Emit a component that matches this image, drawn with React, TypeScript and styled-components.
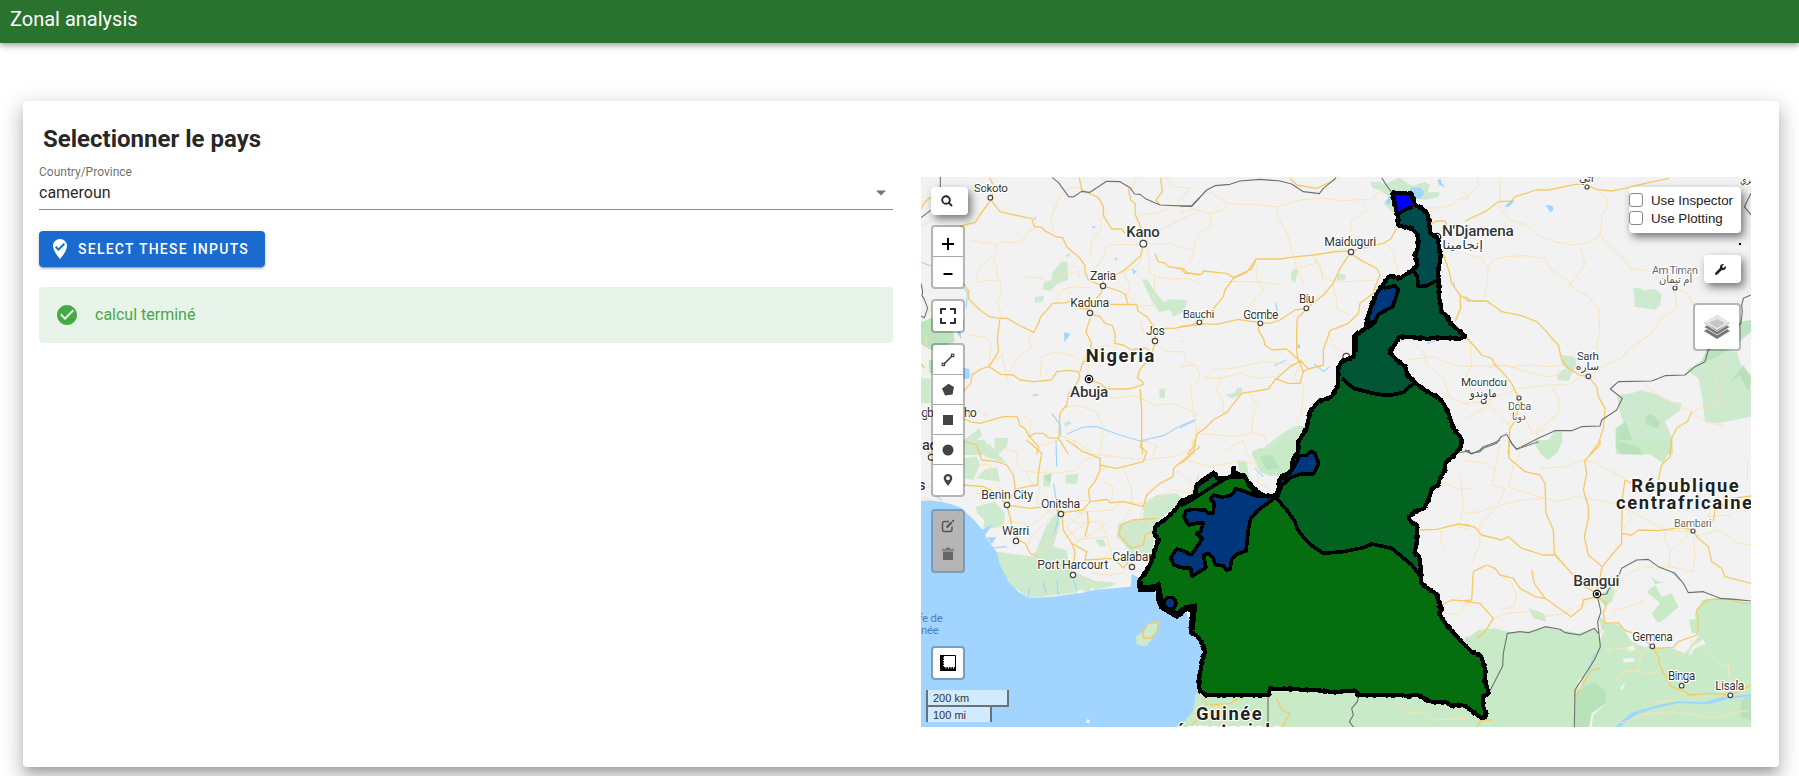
import React from "react";
import styled, { createGlobalStyle, css } from "styled-components";

const GlobalStyle = createGlobalStyle`
  * { box-sizing: border-box; }
  body { margin: 0; background: #fff; font-family: Roboto, "Liberation Sans", sans-serif; color: rgba(0,0,0,.87); overflow: hidden; }
`;

const Page = styled.div`
  height: 776px;
  display: flex;
  flex-direction: column;
  overflow: hidden;
`;

const AppBar = styled.header`
  height: 43px;
  flex: none;
  display: flex;
  align-items: center;
  padding: 0 10px 5px;
  background: #2a732e;
  color: #fff;
  font-size: 20px;
  line-height: 24px;
  box-shadow: 0 2px 4px -1px rgba(0,0,0,.2), 0 4px 5px rgba(0,0,0,.14), 0 1px 10px rgba(0,0,0,.12);
`;

const Card = styled.main`
  margin: 58px 20px 0 23px;
  height: 666px;
  flex: none;
  display: flex;
  gap: 28px;
  padding: 0 28px 0 16px;
  background: #fff;
  border-radius: 4px;
  box-shadow: 0 7px 8px -4px rgba(0,0,0,.2), 0 12px 17px 2px rgba(0,0,0,.14), 0 5px 22px 4px rgba(0,0,0,.12);
`;

const FormColumn = styled.section`
  width: 854px;
  display: flex;
  flex-direction: column;
  align-items: flex-start;
`;

const Title = styled.h2`
  margin: 22px 0 0 4px;
  font-size: 24px;
  font-weight: 700;
  line-height: 32px;
`;

const Field = styled.div`
  width: 100%;
  height: 55px;
  border-bottom: 1px solid #8a8a8a;
  display: flex;
  flex-direction: column;
  padding-top: 10px;
`;

const FieldLabel = styled.label`
  font-size: 12px;
  line-height: 14px;
  color: rgba(0,0,0,.6);
`;

const FieldValue = styled.div`
  display: flex;
  align-items: center;
  justify-content: space-between;
  font-size: 16px;
  line-height: 28px;
`;

const SubmitButton = styled.button`
  margin-top: 21px;
  width: 226px;
  height: 36px;
  display: flex;
  align-items: center;
  padding: 0 0 0 9px;
  gap: 6px;
  border: 0;
  border-radius: 4px;
  background: #196bd0;
  color: #fff;
  font: 500 14px Roboto, sans-serif;
  letter-spacing: 1.25px;
  text-transform: uppercase;
  white-space: nowrap;
  box-shadow: 0 3px 1px -2px rgba(0,0,0,.2), 0 2px 2px rgba(0,0,0,.14), 0 1px 5px rgba(0,0,0,.12);
`;

const Alert = styled.div`
  width: 100%;
  margin-top: 20px;
  height: 56px;
  display: flex;
  align-items: center;
  gap: 16px;
  padding: 0 16px;
  border-radius: 4px;
  background: #e8f3e9;
  color: #46a948;
  font-size: 16px;
`;

const AlertText = styled.span`
  padding-bottom: 2px;
`;

const MapFrame = styled.section`
  position: relative;
  width: 830px;
  height: 550px;
  margin-top: 76px;
  flex: none;
  overflow: hidden;
  background: #f2f2f2;
`;

const MapCanvas = styled.svg`
  display: block;
  width: 830px;
  height: 550px;
  font-family: Roboto, "Noto Sans", "DejaVu Sans", sans-serif;
`;

const Controls = styled.div<{ $side: "left" | "right" }>`
  position: absolute;
  top: 10px;
  ${(p) => p.$side}: 10px;
  display: flex;
  flex-direction: column;
  align-items: ${(p) => (p.$side === "left" ? "flex-start" : "flex-end")};
`;

const panel = css`
  background: #fff;
  border-radius: 4px;
  box-shadow: 3px 4px 9px rgba(0,0,0,.52);
`;

const ToolButton = styled.button`
  ${panel}
  width: 37px;
  height: 28px;
  padding: 0 5px 0 0;
  border: 0;
  display: flex;
  align-items: center;
  justify-content: center;
`;

const Bar = styled.div<{ $gap: number; $muted?: boolean }>`
  margin-top: ${(p) => p.$gap}px;
  border: 2px solid rgba(0,0,0,.25);
  border-radius: 4px;
  background: ${(p) => (p.$muted ? "#b5b5b5" : "#fff")};
  background-clip: padding-box;
`;

const BarButton = styled.button<{ $divided?: boolean; $size?: number; $drop?: number }>`
  display: flex;
  align-items: center;
  justify-content: center;
  width: ${(p) => p.$size ?? 30}px;
  height: ${(p) => p.$size ?? 30}px;
  padding: ${(p) => p.$drop ?? 0}px 0 0;
  border: 0;
  border-bottom: ${(p) => (p.$divided ? "1px solid #aaa" : "0")};
  background: transparent;
`;

const CheckPanel = styled.div`
  ${panel}
  width: 112px;
  height: 46px;
  padding: 4px 0;
`;

const CheckRow = styled.label`
  display: flex;
  align-items: center;
  gap: 8px;
  height: 18px;
  font: 13.3px "Liberation Sans", Arial, sans-serif;
  color: #222;
  white-space: nowrap;
`;

const CheckBox = styled.span`
  width: 14px;
  height: 14px;
  border: 1px solid #888;
  border-radius: 3px;
  background: #fff;
`;

const EmptyControl = styled.span`
  width: 2px;
  height: 2px;
  margin: 10px 0;
  background: #000;
`;

const Scale = styled.div`
  position: absolute;
  left: 5px;
  bottom: 5px;
`;

const ScaleLine = styled.div<{ $w: number; $top?: boolean }>`
  width: ${(p) => p.$w}px;
  height: ${(p) => (p.$top ? 17 : 15)}px;
  border: 2px solid #6d7173;
  border-top: 0;
  ${(p) => !p.$top && "border-bottom: 0;"}
  padding-left: 5px;
  background: rgba(255,255,255,.5);
  font: 11px/16px "Liberation Sans", Arial, sans-serif;
  color: #333;
`;

const Icon = ({ d, size = 24, fill = "currentColor", box = 24 }: { d: string; size?: number; fill?: string; box?: number }) => (
  <svg width={size} height={size} viewBox={`0 0 ${box} ${box}`} fill={fill}>
    <path d={d} />
  </svg>
);

/* ---------- map data: each sheet is drawn at three units per pixel ---------- */

type Label = [x: number, y: number, w: number, text: string, size: number, weight?: number, color?: string];
interface Sheet {
  x: number;
  y: number;
  park?: string;
  dark?: string;
  land?: string;
  water?: string;
  river?: string;
  minor?: string;
  major?: string;
  border?: string;
}

const sheets: Sheet[] = [
  {
    x: -11, y: -12,
    park: "M395 372L404 350L424 348L426 326L452 290L472 290L474 345L440 358L420 378ZM374 396L402 392L398 410L375 413ZM694 342L712 345L727 368L749 398L762 412L781 402L833 406L820 440L790 455L780 435L748 440L728 412ZM467 270L479 265L478 274L469 278ZM748 674L766 670L764 699L748 700ZM462 776L478 766L484 776L467 785ZM160 825L208 790L216 812L190 832L230 838L234 870H160ZM255 820L296 818L290 845L262 870L252 862ZM33 640H62V715H33Z",
    dark: "M33 472L66 458L130 500L134 530L66 556L33 538ZM56 585H68V625H58Z",
    water: "M462 502L482 506L463 532ZM666 312L681 319L670 328ZM371 160L377 154V167ZM545 183L560 186L548 190ZM616 275L624 286L614 284ZM160 455L162 490L152 500L154 523L142 505ZM160 608L178 612L179 640L160 643Z",
    river: "M33 292L65 303M160 368L172 382L168 430M425 745L450 778L452 815M470 808L520 786L560 785L630 810L690 828L760 812L806 785L858 763M368 691L385 689",
    minor: "M180 224L220 235L250 233L260 245L275 230L322 234L345 215L360 195L380 190M255 235L262 262L250 280L262 310L258 330L270 350L275 378L262 410L272 440L275 458M240 278L208 310L198 345L204 352L232 346L262 348M338 335L390 338L410 350L430 345L480 320L510 335M350 560L365 545L355 518L370 505M440 415L447 388L460 372L490 365L540 368M470 300L500 306L510 330M430 200L422 160L438 120L460 78L500 65L525 80M540 280L545 230L575 190L572 155L590 130L560 95M585 52L575 38M600 240L640 238L680 240L700 236L760 190L868 138M700 236L780 236L820 250L858 258M700 245L690 290L670 310L640 320M712 250L720 290L715 320L735 335L780 342L835 340L868 356M590 240L585 265L540 340M640 320L660 365L650 390L690 425L730 420L735 330M690 465L700 500L725 515M735 535L770 560L820 560L830 590L868 606M610 590L618 545L590 540L545 555L520 580L510 620M545 555L530 630M495 575L440 560L395 575L390 640M300 620L320 580L365 545M180 510L228 518L245 540L235 600M235 600L275 570L295 650M160 735L210 740L235 755M33 180L55 175L65 165M33 450L45 460L60 435L65 425M48 510L50 540M570 690L620 700L660 690L695 700L735 722L790 715L868 750M450 810L500 830L540 860M452 730L500 720L560 740L580 790L570 868M695 825L740 840L730 868M358 815L362 765L335 750M840 868L858 800L868 790M690 150L740 145L800 120L840 70L790 65L765 38M660 80L680 38",
    major: "M33 132L45 110L62 97M150 184L175 177L195 173L210 150L240 108L245 102L248 80L250 60L238 38M242 104L270 140L350 158L366 160L372 184L395 187L405 198L440 216L458 218L470 245L510 280L525 302L525 320L535 345L576 362L582 345L640 318L672 290L692 272L700 238M160 355L175 376L176 402L210 435L238 455L270 460L292 460L325 480L372 502L384 478L392 455L405 442L428 415L470 413L478 408L510 430L538 432L575 380L576 362L620 375L645 387L655 420M538 445L570 455L585 475L608 482L616 510L614 535L640 540L665 555L700 548L720 555M600 418L680 418L684 438L710 455L732 485L736 525M270 460L262 520L265 560L237 605L218 610L186 628L182 655L160 680M237 605L272 628L310 630L330 645L370 650L425 645L440 620L475 616L505 620L510 635L500 655L475 690L470 720L450 745L448 790L446 820L415 818L400 805L375 805L358 815L386 845L380 868M358 815L345 790L330 782L322 755L280 755L210 775L180 770L160 760M540 460L528 500L544 535L540 565L515 600L512 620M540 645L570 655L590 672L650 672L665 670L700 658L697 650L682 640L690 612L720 580L735 535M735 515L765 490L790 490L840 482L868 470M690 672L695 730L695 825L697 868M446 820L475 868M735 267L745 290L765 294L775 305L822 312L830 322L868 330M508 38L515 75L565 98L580 125L580 152L605 192L635 192L645 205M655 72L662 105L675 115L676 150L690 180L700 238M752 38L757 80L738 105L748 118M33 598L45 610M33 840L65 870",
    border: "M91 36V68M33 158L62 136M427 38L445 52L476 95L490 96L515 79L540 82L590 49L630 50L660 68L674 87L690 88L710 103L750 120L845 124L870 97M33 355L38 378L36 392L43 403L53 430L43 458L33 453",
  },
  {
    x: 259, y: -12,
    park: "M572 52L600 50L612 60L640 46L660 38L682 55L700 62L735 50L750 60L742 82L780 82L775 95L735 105L710 100L690 130L655 155L630 135L610 115L625 95L600 75L576 68ZM332 325L345 310L355 318L345 354L335 345ZM470 332L480 325L497 330L494 345L472 346ZM137 690L165 682L172 668L186 668L185 690L155 700ZM300 810L340 785L380 780L365 868H235L255 845ZM216 858L240 850L255 868H216ZM0 405L24 406L8 430H0Z",
    water: "M680 84L695 68L722 68L733 82L722 102L700 98ZM618 110L630 92L634 110L624 121ZM772 44L782 43L785 55L798 67L778 60ZM351 550L355 534L362 548Z",
    river: "M403 597L430 620L447 607M282 602L320 584M0 788L48 765M287 412L292 440M741 535L765 528M821 350L823 362",
    minor: "M90 80L140 115L180 118L230 118L290 126L360 105L430 98L480 108L550 103L580 105L590 85L612 75M140 115L130 135L90 145L95 180L60 205L45 235L35 285L10 310M290 126L295 160L320 200L340 270L350 310L372 355M500 250L515 170L545 145L560 140L550 110M0 145L45 132L90 145M350 310L410 295L400 275L440 345L500 350L590 345M430 350L420 300L400 275M455 350L470 405L470 430L510 450M135 350L220 350L305 360M235 290L228 340L250 375L210 420M445 500L455 535L500 570L475 575M615 230L640 260L655 330M75 640L95 615L160 610L250 590L350 600M75 640L120 640L180 625L235 640L285 635M120 640L110 680L130 710L130 750M205 680L235 725L220 745L215 800L250 812L260 835M0 605L40 600L60 620L55 650L30 665L40 740L52 805M52 805L110 810L165 815L215 805M360 600L340 640L372 660L365 740L350 770M0 530L20 527M430 265L500 250M706 125L760 130L820 120L830 105L868 95M846 80L868 92M680 585L760 575L820 600L870 604M680 520L730 560L740 600L790 640L810 700L868 720",
    major: "M0 308L15 325L65 328L70 318L140 325L160 338L215 312L228 282L300 282L350 275L400 270L470 260L512 258L610 235L632 222L650 190M228 282L200 322L160 340L135 375L130 395L105 425L95 440L65 468M0 484L50 480L60 476L110 478L175 463L205 468L270 475L300 465L345 435L380 430L430 390L460 355L480 310L510 265L550 290L590 310L600 330L585 365L580 385L540 415L535 445L505 475L450 497L430 555L430 600L385 612L365 590L345 575L320 552L275 555L255 540L250 520L235 495L237 475M380 432L352 460L350 500L350 560L356 590M385 612L368 620L360 590L330 605L285 645L265 672L185 685L140 742L100 765L75 790L50 808L45 840L22 868M285 640L325 655L360 655L370 620M330 40L350 60L410 70L465 45L468 38M748 180L770 168L795 168L800 180M790 268L808 320L815 355L840 390L842 430L825 470M840 390L868 410M850 516L868 525M720 210L735 205L750 205",
    border: "M0 123L35 123L80 75L105 62L150 58L180 48L240 43L300 48L335 57L370 80L418 86L430 70L455 50L468 38M605 38L620 62L638 85M862 857H870",
  },
  {
    x: 544, y: -12,
    park: "M505 370L520 368L535 375L570 373L590 388L585 420L570 435L510 425ZM290 570L330 575L335 605L320 625L292 600ZM275 630L300 610L320 625L310 648L280 645ZM212 832L250 825L270 798L290 800L292 830L270 868H230L212 845ZM455 690L500 685L530 675L580 690L620 710L650 715L645 735L600 770L622 820L625 868H450L480 790L465 740ZM665 615L720 580L760 555L815 560L828 600L858 630V755L760 775L720 768L712 700L700 640Z",
    dark: "M452 790L480 770L500 820L500 868H470L452 850ZM540 755L560 748L585 770L580 790L545 780ZM735 525L825 470L858 465V500L800 550L735 585L710 590ZM797 650L835 600L858 640L850 680L825 630Z",
    water: "M118 125L140 104L148 108L132 125ZM241 119L262 122L265 136L256 142Z",
    river: "M10 407L65 408L75 415",
    minor: "M105 38L105 130L135 165L185 180L225 215L270 230L320 240L375 232L405 210L410 180L410 150L425 130L425 100L395 72M0 265L50 280L70 315L65 365L58 400M70 310L85 285L120 275L180 272L240 280L255 310L305 345L320 365L370 395L400 430L405 500L395 540L400 560L370 598M348 250L360 300L312 365M405 210L430 240L470 275L495 310L560 320L590 345L630 370L635 430L590 460L555 510L495 550L470 580L410 605L380 625M630 370L665 385L690 425M0 605L95 600L140 605L190 600L260 605L300 600M60 610L120 600L200 625L250 635L335 620M0 715L60 710L100 695L160 670L250 660L310 660L350 635M60 710L110 755L130 780L155 720M200 805L240 780L285 740L280 700L260 665M180 760L205 810L240 790M0 760L40 740L70 720M38 40L40 60L0 108M15 530L20 600L0 640M535 655L580 690L645 725L680 740L720 725L765 722L768 700L750 650L760 610L780 580M680 740L720 770L780 783M488 180L490 200",
    major: "M0 168L60 140L100 110L140 108L150 95L215 75L250 75L330 58L360 58L395 73L440 78L480 70L540 55L612 40M0 395L20 408L65 408L90 425L110 440L170 452L215 470L245 500L260 520L280 540L290 585L310 610L345 630L370 635L395 665L400 695L420 730L415 790L400 835L375 868M0 515L25 540L50 570L80 580L90 600L120 630L140 655L160 700L155 760L135 790L130 868M680 740L668 768L635 790L620 820L615 868",
    border: "M858 85L838 125L858 150M858 390L835 400L830 420L832 440L828 475L730 555L720 590L690 605L660 630L600 632L560 648L460 650L436 672L472 700L455 735L410 765L405 783L350 785L320 797L270 797L220 820L155 853L140 835L125 808L108 815L95 835L55 850L45 860L20 865L0 855",
  },
  {
    x: -11, y: 263,
    park: "M165 0L225 0L235 20L210 35L190 25ZM160 55L200 50L210 75L190 120L165 115ZM225 50L290 70L235 10ZM225 88L262 82L270 125L200 115ZM400 105L425 100L420 140L400 138ZM466 105L505 102L500 132L468 130ZM196 200L255 185L268 200L285 220L280 260L220 268L222 240L202 220ZM700 190L740 165L800 160L820 180L770 220L740 250L725 345L665 340L635 305L620 290L625 250L700 235ZM555 300L580 298L590 318L570 320ZM865 100L870 190L840 180ZM258 335L370 350L410 255L440 220L450 250L430 320L470 330L480 390L560 425L540 452L360 475L310 440L270 390ZM550 422L620 428L600 440L550 450Z",
    dark: "M402 112L425 100L420 130Z",
    water: "M33 183C70 177 110 186 150 202L190 238L218 270L228 292L262 340L268 372L296 425L325 455L360 475L430 470L500 460L560 449L662 440L665 402L690 415L720 450L830 520L850 580L890 640L866 735L860 800L835 840L825 861H33ZM215 270L248 252L225 285ZM230 292L258 292L245 312ZM680 0L715 0L700 5Z",
    river: "M438 0L440 80M430 130L437 170L445 240L430 285M80 170L95 180M490 420L500 448M358 440L355 470M400 425L408 460M440 420L445 465M235 325L290 320",
    minor: "M250 0L280 25L320 35L325 80L350 95L440 100L500 90L520 60L560 50M350 95L365 130L390 140L380 190L430 220M380 20L450 0M490 0L510 35L565 45M565 45L700 60L790 50L870 15M590 80L560 110L610 140L605 180L570 180M640 80L665 150L665 200L640 240L665 300L705 290L730 290M700 190L690 240L700 250M700 190L740 180L790 150L870 165M700 190L640 185L600 190M790 85L850 130L845 165M535 180L440 195L360 260L340 250L290 245M530 210L470 260L500 300L590 290L605 340L570 360M460 215L500 250L570 245L590 285M430 225L365 290L350 320M455 270L410 310L385 330L360 350M465 290L500 270L545 240M490 310L550 280L590 250M545 400L600 405L640 398L660 415M510 410L560 440M185 70L240 75L245 120L300 170M200 160L250 170L300 190M720 220L725 260M40 150L65 135M33 175L90 185M600 215L640 180M605 210L530 215L500 220",
    major: "M150 0L200 15L215 60L260 65L290 75L310 105L316 150L290 195L360 205L420 198L455 218L520 210L540 185L535 150L555 125L570 90L570 75L620 85L700 65L710 35L690 20L697 0M350 0L395 40L385 100L383 135L350 140L310 150M160 135L220 140L250 155L290 195L300 230L310 275L325 300L345 310L360 340L385 350M456 230L460 270L485 310L495 335L490 385M485 310L530 335L525 360L610 355L640 385M540 185L590 178L600 188L640 185L700 200L710 165L750 130L790 110L790 85L870 20M470 0L520 35L570 55L570 85M640 300L665 325L700 315L705 285L735 270M640 300L625 280L635 255L665 240L740 235M640 385L665 350M525 290L535 250L532 215",
    land: "M500 455L515 448L525 456L505 461ZM528 848L532 836L540 842L538 850Z",
  },
  {
    x: 259, y: 263,
    park: "M40 155L48 135L80 115L105 95L130 120L70 190ZM172 60L200 65L210 130L180 100ZM215 40L240 25L280 25L310 0H370V60L310 105L270 108L240 95ZM0 861L40 810L48 760L90 770H870V861ZM270 755H535V861H270ZM855 590H870V800H855Z",
    dark: "M240 50L275 45L300 85L260 90Z",
    minor: "M35 0L45 40L20 60L90 80L170 65L230 70M130 35L190 0M230 70L235 130L275 150L270 160M190 0L200 40L230 70M785 270L780 300L800 330M840 100L850 200L835 260L870 270M785 110L790 130L840 150L870 145M780 515L840 525L855 490L870 495M650 785L680 820L740 815L760 840L870 835M100 790L140 830L150 861",
    major: "M45 0L40 35L10 65L0 70M720 270L770 268L835 252L870 258M785 495L815 480L870 484M65 775L80 790L60 830L30 861M290 775L305 810L330 820L305 861M185 770L150 790L90 795",
    border: "M264 769V861M535 769L532 785L515 805L520 825L508 845L520 861M838 38L870 32",
    river: "M225 85L250 110",
  },
  {
    x: 544, y: 263,
    park: "M0 600L40 570L90 565L127 575L165 580L230 562L290 570L340 580L390 565L405 600L430 550L465 555L480 575L500 605L535 620L620 625L660 640L700 590L690 520L712 480L770 472L858 488V861H0ZM210 0L290 0L280 35L250 60L225 40ZM460 0L610 0L615 30L595 70L550 40L500 45ZM190 505L235 520L245 545L205 535ZM400 470L430 445L450 450L440 485L420 500ZM545 455L570 435L590 470L620 460L640 500L590 545L575 545L560 520L585 490ZM560 410L580 425L605 425L570 433ZM672 540L695 535V580L680 580ZM400 525L435 560L455 585L410 570Z",
    dark: "M345 745L390 725L425 760L420 790L380 820L375 861H328L332 765ZM830 780L858 765V842L825 830ZM460 5L520 20L535 45L490 40Z",
    land: "M425 790L385 825L380 861H372L380 820ZM465 745L478 730L480 736L470 750ZM475 655L512 655L505 665L475 668ZM480 625L505 615L512 630L495 635ZM670 645L682 620L715 598L722 612L690 625L678 645ZM340 720L350 712L350 745L340 755Z",
    water: "M450 861L500 818L580 795L640 784L720 786L770 772L858 762V769L790 777L730 793L640 790L570 805L510 826L465 861Z",
    river: "M389 640L370 700M620 395L645 420",
    minor: "M0 60L60 70L90 90L80 135L120 145L95 200L40 260L45 310L20 370M90 90L105 10M0 220L45 215L95 200M95 200L150 185L170 180L240 175L280 185L330 170L400 180L450 190L475 215M145 75L130 140L155 150L240 175M225 85L300 80L350 60L385 65L430 90L480 115M170 0L160 60L145 75M470 270L500 235L480 200M490 210L600 270L600 300L615 330L612 380M600 270L680 275L620 330M80 380L110 410L140 430L155 470L145 500L110 510M85 535L125 520L190 515L240 530L300 520L325 500M340 500L400 470L450 465L470 420L500 395L540 380L580 385L600 378L640 385L685 395L690 350L685 290M445 530L450 510L490 500L540 480M405 570L440 620L430 660M420 630L480 625L530 640L560 620M530 640L520 690L470 700L450 730M480 690L570 700L590 680M620 640L670 650L680 600L720 630L770 680L790 670L795 750M470 850L530 825L620 815L700 825L740 835L855 810M690 290L760 270L820 310L858 315M740 190L730 230L800 225M848 60V120M660 755L620 780L560 790",
    major: "M0 252L30 262L50 285L110 300L130 290L170 325L235 345L270 345L320 400L360 440L395 460M132 0L132 55L180 95L225 105L240 130L243 220L265 270L268 340L320 400M405 0L405 15L358 62L365 100L355 150L370 200L370 235L358 290L370 345L412 380L395 455M412 380L440 345L470 310L470 275L472 175L480 120L500 130M470 280L500 285L520 270L580 272L650 262L682 270L700 295L730 320L740 365L770 385L780 410L858 430M0 482L20 480L25 395L65 375L90 385L105 405L145 415L165 445L210 470L240 475L290 510L318 530L350 505L355 480L395 470M200 390L208 430L240 475M0 485L45 490L85 535L60 575L35 595M395 470L425 490L415 520L420 550L460 548L480 572L510 580L550 610L570 625L625 622L640 605L695 585L700 550L695 510L725 480L790 476L830 490L858 490M562 620L580 650L585 680L620 740L660 755L670 765L740 760L795 765L820 755L858 735M405 685L380 690L345 745L330 780M620 0L615 50L590 75L580 120M35 861L50 840L80 840M745 245L750 210L800 175L858 168",
    border: "M0 32L20 42L45 30L55 20L85 10L105 0M135 0L140 10L155 28L220 5M395 460L408 515L398 545L406 620L388 660L330 750L328 861M396 465L425 462L430 450L460 410L470 385L515 360L550 358L580 380L630 400L655 430L670 458L715 455L765 475L810 478L858 483M75 752L113 678L115 640L127 580L165 575L190 578L215 570L240 560L285 568L300 578L345 585L388 565L400 580",
  },
];

const SEA = "#4a7fc4";

const labels: Array<{ x: number; y: number; items: Label[] }> = [
  {
    x: -11, y: -12,
    items: [
      [192, 81, 102, "Sokoto", 35], [649, 216, 100, "Kano", 45, 500], [540, 346, 79, "Zaria", 37], [481, 427, 117, "Kaduna", 37],
      [708, 509, 57, "Jos", 37], [527, 592, 206, "Nigeria", 55, 700, "#222"], [480, 697, 115, "Abuja", 46, 500],
      [34, 756, 38, "gb", 37], [162, 756, 38, "ho", 37], [36, 856, 48, "ad", 45, 500],
    ],
  },
  {
    x: 259, y: -12,
    items: [[433, 243, 156, "Maiduguri", 37], [357, 414, 46, "Biu", 36], [8, 460, 95, "Bauchi", 35], [190, 462, 105, "Gombe", 36]],
  },
  {
    x: 544, y: -12,
    items: [
      [-69, 214, 215, "N'Djamena", 46, 500], [-68, 252, 122, "إنجامينا", 37], [342, 52, 44, "أتي", 32],
      [561, 327, 138, "Am Timan", 34, 400, "#666"], [582, 354, 100, "أم تيمان", 32, 400, "#555"],
      [336, 585, 66, "Sarh", 35], [332, 616, 70, "ساره", 33], [-12, 663, 138, "Moundou", 35], [14, 696, 82, "ماوندو", 33],
      [129, 735, 70, "Doba", 33, 400, "#555"], [141, 765, 42, "دوبا", 32, 400, "#555"], [825, 54, 40, "بري", 30],
    ],
  },
  {
    x: -11, y: 263,
    items: [
      [25, 150, 21, "s", 42, 500], [214, 178, 155, "Benin City", 37], [393, 204, 118, "Onitsha", 37], [276, 285, 82, "Warri", 37],
      [382, 387, 213, "Port Harcourt", 37], [607, 363, 120, "Calabar", 37],
      [-24, 546, 122, "Golfe de", 34, 400, SEA], [-15, 582, 101, "Guinée", 34, 400, SEA],
    ],
  },
  { x: 259, y: 263, items: [[48, 840, 197, "Guinée", 55, 700, "#222"], [-14, 891, 318, "équatoriale", 55, 700, "#222"]] },
  {
    x: 544, y: 263,
    items: [
      [499, 157, 322, "République", 55, 700, "#222"], [453, 208, 408, "centrafricaine", 55, 700, "#222"],
      [627, 260, 113, "Bambari", 33, 400, "#666"], [325, 438, 138, "Bangui", 46, 500], [502, 603, 121, "Gemena", 36],
      [609, 719, 82, "Binga", 36], [751, 750, 87, "Lisala", 36],
    ],
  },
];

const towns: Array<{ x: number; y: number; at: Array<[number, number, number]> }> = [
  { x: -11, y: -12, at: [[241, 98, 7], [700, 236, 10], [579, 363, 8], [540, 444, 8], [735, 528, 8]] },
  { x: 259, y: -12, at: [[513, 261, 8], [379, 430, 7], [58, 472, 7], [241, 475, 7], [499, 575, 10]] },
  { x: 544, y: -12, at: [[366, 66, 6], [630, 369, 6], [370, 634, 7], [56, 709, 7], [162, 699, 6]] },
  { x: -11, y: 263, at: [[291, 195, 8], [453, 222, 8], [318, 303, 8], [489, 405, 8], [666, 381, 8], [64, 52, 9]] },
  { x: 544, y: 263, at: [[684, 273, 6], [562, 619, 7], [650, 737, 7], [796, 766, 7]] },
];

const capitals = [
  { x: 168, y: 202 },
  { x: 676, y: 417 },
  { x: 516, y: 60 },
];

const outline =
  "M636 84L693 86L699 98L706 122L724 128L742 146L748 170L750 205L770 215L774 222L777 250L782 268L778 300L774 320L776 345L778 400L784 440L800 452L812 475L834 495L856 514L840 521L800 518L740 521L700 517L656 516L648 534L628 560L650 585L676 605L682 630L704 652L735 676L776 698L790 715L806 745L820 790L838 812L846 825L842 848L820 873L797 893L795 915L780 940L775 960L757 970L745 1005L733 1030L705 1040L685 1057L695 1073L712 1080L710 1135L703 1165L718 1175L722 1205L724 1255L750 1275L770 1287L778 1315L787 1333L777 1345L800 1380L840 1425L875 1460L903 1472L912 1500L916 1520L915 1550L927 1585L910 1595L910 1625L920 1652L905 1660L885 1645L855 1622L830 1620L815 1624L800 1612L768 1612L745 1608L720 1592L700 1590L685 1595L670 1591L535 1591L528 1577L460 1581L410 1576L350 1573L320 1571L270 1571L266 1591L80 1591L60 1577L56 1560L60 1525L70 1470L76 1463L65 1432L50 1412L33 1403L33 1375L42 1328L28 1335L14 1328L2 1350L-15 1345L-32 1332L-55 1325L-65 1305L-65 1265L-85 1265L-122 1268L-122 1245L-105 1225L-85 1190L-75 1155L-65 1125L-77 1105L-75 1085L-40 1060L-10 1030L2 1010L45 990L50 960L75 945L105 923L112 940L140 940L160 933L160 905L164 925L195 933L205 955L228 975L233 988L275 995L294 984L298 945L318 933L335 915L338 885L355 858L355 830L380 790L390 740L415 710L455 695L475 660L475 610L484 590L522 575L525 510L555 492L565 450L575 420L590 385L628 333L660 340L694 318L713 300L705 270L715 245L713 210L695 190L655 182L653 155L645 120Z";

const centreLine = "M704 652L670 682L635 690L610 690L580 685L520 670L485 640";
const southLine = "M290 1000L320 1035L345 1070L352 1092L375 1123L400 1145L430 1165L490 1160L550 1148L575 1137L635 1150L665 1175L695 1200L722 1235";
const farNorthLine = "M698 315L712 335L715 365L740 362L775 345";
const westLake =
  "M290 995L233 995L190 978L165 970L162 982L150 992L125 996L100 990L90 1003L102 1012L100 1045L85 1045L75 1035L38 1033L18 1038L12 1055L25 1080L48 1075L70 1072L62 1100L48 1106L67 1120L48 1150L33 1170L12 1158L-10 1152L-28 1178L-18 1200L5 1208L32 1210L36 1235L55 1222L78 1208L70 1170L85 1165L100 1180L106 1200L130 1202L138 1215L150 1212L155 1183L170 1168L198 1158L205 1095L212 1060L235 1035Z";
const benueSpur = "M292 998L305 962L330 938L360 928L400 928L416 895L405 865L392 858L380 872L358 872L345 900L330 923L305 932L298 955Z";

const Cameroon = () => (
  <g transform="translate(259 -12) scale(.33333)" shapeRendering="crispEdges">
    <clipPath id="country"><path d={outline} /></clipPath>
    <g clipPath="url(#country)">
      <path d={outline} fill="#056f0f" />
      <path d={`${southLine}L900 1240V600L704 652L670 682L610 690L520 670L485 640L300 700V980Z`} fill="#026220" />
      <path d={`${centreLine}L400 620V200L650 280L698 315L712 335L715 365L775 345L870 400V600Z`} fill="#005534" />
      <path d="M640 150L700 120L850 120V340L775 345L715 365L698 315Z" fill="#004b4b" />
      <path d="M620 70H740V120L698 124L650 155Z" fill="#0000ff" />
      <path d="M40 990V940L110 900L125 940Z" fill="#026220" />
    </g>
    <path d={westLake} fill="#00367b" />
    <path d={benueSpur} fill="#00367b" />
    <path d="M588 382L610 370L645 362L655 372L650 390L638 425L595 448L585 470L568 475L572 430Z" fill="#00367b" />
    <ellipse cx="-30" cy="1315" rx="17" ry="17" fill="#00367b" />
    <g fill="none" stroke="#000" strokeWidth="11" strokeLinejoin="bevel">
      <path d={centreLine} />
      <path d={southLine} />
      <path d={farNorthLine} />
      <path d="M650 155L664 140L698 125M2 1022L42 1001L80 975L130 945L160 930" />
      <path d={westLake} />
      <path d={benueSpur} />
      <path d="M610 370L645 362L655 372L650 390L638 425L595 448L585 470L568 475" />
      <ellipse cx="-30" cy="1315" rx="18" ry="18" />
    </g>
    <path d={outline} fill="none" stroke="#000" strokeWidth="12" strokeLinejoin="bevel" />
    <path d={outline} fill="none" stroke="#000" strokeWidth="16" strokeDasharray="9 14 5 21 12 8 7 30" strokeLinejoin="bevel" />
    <path d="M-120 1250L-118 1272H-80L-66 1262L-55 1325L-10 1352L15 1330L42 1325L35 1395M205 955L225 978L240 988" fill="none" stroke="#000" strokeWidth="18" />
    <path d="M160 905V935L195 935M105 923L75 942L50 962M784 1333L776 1320M560 490L582 470M525 560V510" fill="none" stroke="#000" strokeWidth="16" />
  </g>
);

const layerGroup = (s: { x: number; y: number }) => `translate(${s.x} ${s.y}) scale(.33333)`;

const ZonalMap = () => (
  <MapCanvas viewBox="0 0 830 550">
    <rect width="830" height="550" fill="#f2f2f2" />
    {sheets.map((s, i) => (
      <g key={i} transform={layerGroup(s)}>
        <path d={s.park} fill={i >= 4 ? "#c8eac7" : "#cde9ce"} />
        <path d={s.dark} fill="#b5e1b7" fillOpacity=".85" />
        <path d={s.water} fill="#a1d5ff" />
        <path d={s.land} fill="#f2f2f2" />
      </g>
    ))}
    {sheets.map((s, i) => (
      <g key={i} transform={layerGroup(s)} fill="none" strokeLinejoin="round">
        <path d={s.river} stroke="#a1d5ff" strokeWidth="3.5" />
        <path d={s.minor} stroke="#fae3b4" strokeWidth="2.8" />
        <path d={s.major} stroke="#f6ca63" strokeWidth="3.9" />
        <path d={s.border} stroke="#707070" strokeWidth="3.3" />
      </g>
    ))}
    <g transform="translate(-11 263) scale(.33333)">
      <path d="M678 590L705 568L715 548L744 548L742 575L725 598L708 620L680 612Z" fill="#cde9ce" />
      <path d="M744 548L714 551L697 580L702 595L724 594L743 570Z" fill="none" stroke="#f6c95f" strokeWidth="4" />
    </g>
    {towns.map((g, i) => (
      <g key={i} transform={layerGroup(g)} fill="#fff" stroke="#444" strokeWidth="3.6">
        {g.at.map(([x, y, r]) => <circle key={x} cx={x} cy={y} r={r} />)}
      </g>
    ))}
    {capitals.map((c) => (
      <g key={c.x} transform={`translate(${c.x} ${c.y})`}>
        <circle r="3.7" fill="#fff" stroke="#111" strokeWidth="1.2" />
        <circle r="2" fill="#111" />
      </g>
    ))}
    {labels.map((g, i) => (
      <g key={i} transform={layerGroup(g)} strokeWidth="7" strokeLinejoin="round" paintOrder="stroke">
        {g.items.map(([x, y, w, text, size, weight = 400, color = "#333"]) => (
          <text key={text} x={x} y={y} fontSize={size} fontWeight={weight} fill={color} stroke={color === SEA ? "none" : "#fff"} textLength={w}
            lengthAdjust={/[\u0600-\u06ff]/.test(text) ? "spacingAndGlyphs" : "spacing"}>{text}</text>
        ))}
      </g>
    ))}
    <Cameroon />
  </MapCanvas>
);

const SearchIcon = () => (
  <svg width="12" height="12" viewBox="0 0 12 12" fill="none" stroke="#222" strokeWidth="1.9">
    <circle cx="5" cy="5" r="3.8" /><path d="M7.7 7.7L11 11" />
  </svg>
);

const LayersIcon = () => (
  <svg width="28" height="28" viewBox="0 0 28 28">
    <path d="M1 18L14 26L27 18L24 16L14 22L4 16Z" fill="#777" />
    <path d="M1 14L14 22L27 14L24 12L14 18L4 12Z" fill="#777" stroke="#fff" strokeWidth=".6" />
    <path d="M14 2L27 10L14 18.500L1 10Z" fill="#8a8a8a" stroke="#fff" strokeWidth=".6" />
    <path d="M14 1.500L27 9.500L14 17L1 9.500Z" fill="#e6e6e6" />
    <path d="M14 6L22 10L14 15L6 10Z" fill="#c6c6c6" />
  </svg>
);

const drawIcons = [
  <svg key="line" width="14" height="14" viewBox="0 0 14 14" fill="#fff" stroke="#333" strokeWidth="1.5">
    <path d="M3 11L11 3" /><rect x="1.200" y="10.300" width="2.300" height="2.300" strokeWidth="1.100" /><rect x="10.500" y="1.300" width="2.300" height="2.300" strokeWidth="1.100" />
  </svg>,
  <Icon key="poly" box={14} size={14} fill="#444" d="M1 5.500L7.500 .8L13 4L11.500 11.500L4 12.500Z" />,
  <Icon key="rect" box={14} size={14} fill="#444" d="M2 2H12V12H2Z" />,
  <Icon key="circle" box={14} size={14} fill="#444" d="M7 1.500A5.500 5.500 0 1 0 7 12.500A5.500 5.500 0 1 0 7 1.500Z" />,
  <svg key="pin" width="14" height="14" viewBox="0 0 14 14"><path fill="#444" fillRule="evenodd" d="M7 1C4.500 1 2.700 2.800 2.700 5.200C2.700 8 7 12.800 7 12.800S11.300 8 11.300 5.200C11.300 2.800 9.500 1 7 1ZM7 3.200A2 2 0 1 1 7 7.200A2 2 0 1 1 7 3.200Z" /></svg>,
];

export default function App() {
  return (
    <>
      <GlobalStyle />
      <Page>
        <AppBar>Zonal analysis</AppBar>
        <Card>
          <FormColumn>
            <Title>Selectionner le pays</Title>
            <Field>
              <FieldLabel>Country/Province</FieldLabel>
              <FieldValue>
                cameroun
                <Icon d="M7,9.500L12,14.500L17,9.500H7Z" fill="#757575" />
              </FieldValue>
            </Field>
            <SubmitButton>
              <Icon d="M12,2C8.140,2 5,5.140 5,9C5,14.250 12,22 12,22C12,22 19,14.250 19,9C19,5.140 15.860,2 12,2M10.470,14L7,10.500L8.400,9.090L10.470,11.170L15.600,6L17,7.410L10.470,14Z" />
              Select these inputs
            </SubmitButton>
            <Alert>
              <Icon d="M12 2C6.500 2 2 6.500 2 12S6.500 22 12 22 22 17.500 22 12 17.500 2 12 2M10 17L5 12L6.410 10.590L10 14.170L17.590 6.580L19 8L10 17Z" />
              <AlertText>calcul terminé</AlertText>
            </Alert>
          </FormColumn>
          <MapFrame>
            <ZonalMap />
            <Controls $side="left">
              <ToolButton><SearchIcon /></ToolButton>
              <Bar $gap={10}>
                <BarButton $divided $drop={5}><Icon box={14} size={14} fill="#000" d="M6 1H8V6H13V8H8V13H6V8H1V6H6Z" /></BarButton>
                <BarButton $drop={3}><Icon box={14} size={14} fill="#000" d="M2.500 6H11.500V8H2.500Z" /></BarButton>
              </Bar>
              <Bar $gap={10}>
                <BarButton><Icon box={16} size={16} fill="#333" d="M0 0H6V2H2V6H0ZM10 0H16V6H14V2H10ZM0 10H2V14H6V16H0ZM14 10H16V16H10V14H14Z" /></BarButton>
              </Bar>
              <Bar $gap={10}>
                {drawIcons.map((icon, i) => <BarButton key={i} $divided={i < 4}>{icon}</BarButton>)}
              </Bar>
              <Bar $gap={12} $muted>
                <BarButton>
                  <svg width="14" height="14" viewBox="0 0 14 14" fill="none" stroke="#555" strokeWidth="1.500">
                    <path d="M8 2.500H3.500Q1.500 2.500 1.500 4.500V10.500Q1.500 12.500 3.500 12.500H9Q11 12.500 11 10.500V7.500" /><path d="M5.500 8.500L10.800 3.200M11.500 2.500L12.800 1.200" strokeWidth="2.200" />
                  </svg>
                </BarButton>
                <BarButton>
                  <svg width="14" height="18" viewBox="0 0 14 18" fill="#666"><path d="M2 4.500H12V13H2ZM1 2.300H13V3.500H1ZM5 .8H9V2H5Z" /></svg>
                </BarButton>
              </Bar>
              <Bar $gap={73}>
                <BarButton>
                  <svg width="16" height="16" viewBox="0 0 16 16"><path fill="#000" d="M0 0H4V12H16V16H0Z" /><path d="M4 .5H15.500V12" stroke="#000" strokeWidth="1" fill="none" /><path d="M3 3H4.500M3 5.500H4.500M3 8H4.500M3 10.500H4.500M6 11.500V13.500M8.500 11.500V13.500M11 11.500V13.500M13.500 11.500V13.500" stroke="#fff" strokeWidth="1" /></svg>
                </BarButton>
              </Bar>
            </Controls>
            <Controls $side="right">
              <CheckPanel>
                <CheckRow><CheckBox />Use Inspector</CheckRow>
                <CheckRow><CheckBox />Use Plotting</CheckRow>
              </CheckPanel>
              <EmptyControl />
              <ToolButton>
                <Icon box={512} size={11} fill="#222" d="M507.730 109.100c-2.240-9.030-13.540-12.090-20.120-5.510l-74.360 74.360-67.880-11.310-11.310-67.880 74.360-74.360c6.620-6.620 3.430-17.900-5.660-20.160-47.380-11.740-99.550.91-136.580 37.930-39.640 39.640-50.550 97.100-34.050 147.200L18.740 402.760c-24.990 24.990-24.990 65.510 0 90.500 24.990 24.990 65.510 24.990 90.500 0l213.210-213.210c50.120 16.710 107.470 5.680 147.370-34.220 37.070-37.070 49.700-89.320 37.910-136.730z" />
              </ToolButton>
              <Bar $gap={20}>
                <BarButton $size={44}><LayersIcon /></BarButton>
              </Bar>
            </Controls>
            <Scale>
              <ScaleLine $w={83} $top>200 km</ScaleLine>
              <ScaleLine $w={66}>100 mi</ScaleLine>
            </Scale>
          </MapFrame>
        </Card>
      </Page>
    </>
  );
}
